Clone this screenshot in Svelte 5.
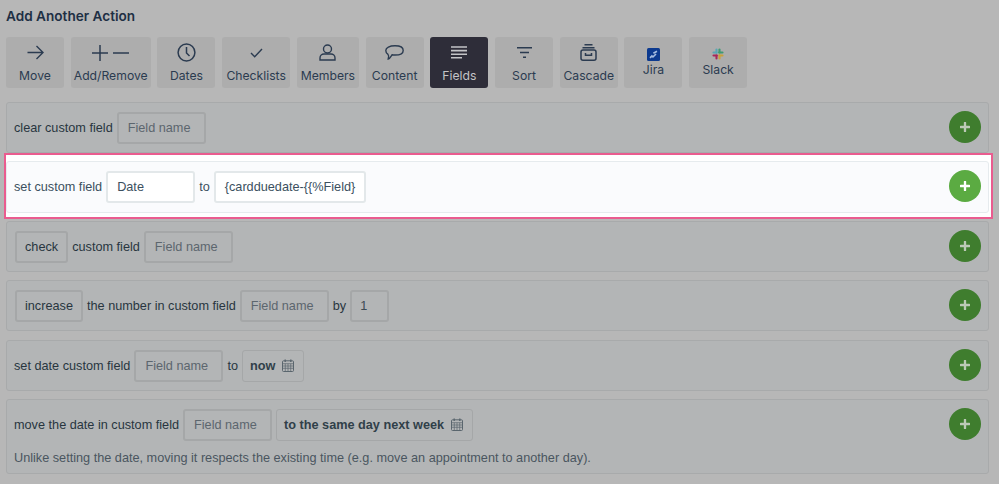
<script>
  const tools = [
    { id: 'move', label: 'Move', w: 58 },
    { id: 'addremove', label: 'Add/Remove', w: 80 },
    { id: 'dates', label: 'Dates', w: 58 },
    { id: 'check', label: 'Checklists', w: 68 },
    { id: 'members', label: 'Members', w: 62 },
    { id: 'content', label: 'Content', w: 58 },
    { id: 'fields', label: 'Fields', w: 58, active: true },
    { id: 'sort', label: 'Sort', w: 58 },
    { id: 'cascade', label: 'Cascade', w: 58 },
    { id: 'jira', label: 'Jira', w: 58, small: true },
    { id: 'slack', label: 'Slack', w: 58, small: true }
  ];
</script>

{#snippet cal()}
  <svg class="cal" viewBox="0 0 12 13" width="12" height="13" aria-hidden="true">
    <rect x="0.5" y="1.8" width="11" height="10.7" rx="1" fill="none" stroke="currentColor" />
    <path d="M0.5 4.7H11.5M0.5 7H11.5M0.5 9.3H11.5M3.3 4.7V12.5M6 4.7V12.5M8.7 4.7V12.5" stroke="currentColor" stroke-width="0.7" fill="none" />
    <path d="M3.2 0.5V3M8.8 0.5V3" stroke="currentColor" stroke-width="1.4" fill="none" />
  </svg>
{/snippet}

{#snippet plus()}
  <button class="add" aria-label="add">
    <svg viewBox="0 0 12 12" width="10" height="10"><path d="M6 1V11M1 6H11" stroke="currentColor" stroke-width="2.8" stroke-linecap="round" /></svg>
  </button>
{/snippet}

<div class="page">
  <h2>Add Another Action</h2>
  <div class="tools">
    {#each tools as t}
      <button class="tool" class:active={t.active} class:small={t.small} style="width:{t.w}px">
        <span class="ico">
          {#if t.id === 'move'}
            <svg width="17" height="15" viewBox="0 0 17 15" fill="none" stroke="currentColor" stroke-width="1.4"><path d="M0.5 7.5H16M9.5 1L16 7.5L9.5 14" /></svg>
          {:else if t.id === 'addremove'}
            <svg width="37" height="16" viewBox="0 0 37 16" fill="none" stroke="currentColor" stroke-width="1.5"><path d="M0 8H16M8 0V16M21 8H37" /></svg>
          {:else if t.id === 'dates'}
            <svg width="19" height="19" viewBox="0 0 19 19" fill="none" stroke="currentColor" stroke-width="1.5"><circle cx="9.5" cy="9.5" r="8.4" /><path d="M9.5 4V10L12.5 13" /></svg>
          {:else if t.id === 'check'}
            <svg width="13" height="10" viewBox="0 0 13 10" fill="none" stroke="currentColor" stroke-width="1.4"><path d="M1 5L4.7 8.7L12 1" /></svg>
          {:else if t.id === 'members'}
            <svg width="17" height="17" viewBox="0 0 17 17" fill="none" stroke="currentColor" stroke-width="1.4"><circle cx="8.5" cy="5" r="4" /><path d="M1 16V14C1 11.5 3 10 5 10H12C14 10 16 11.5 16 14V16Z" /></svg>
          {:else if t.id === 'content'}
            <svg width="19" height="15" viewBox="0 0 19 15" fill="none" stroke="currentColor" stroke-width="1.4"><path d="M10 0.8C15 0.8 18.2 2.6 18.2 5.4C18.2 8.2 14.8 10 10 10C9 10 8 10 7 9.8C6 11.2 4.5 14 3.2 14C3.7 12.5 4 10.5 3 9.4C1.6 8.4 0.8 7 0.8 5.4C0.8 2.6 4.5 0.8 10 0.8Z" /></svg>
          {:else if t.id === 'fields'}
            <svg width="16" height="13" viewBox="0 0 16 13" fill="none" stroke="currentColor" stroke-width="1.6"><path d="M0 1H16M0 4.6H16M0 8.2H16M0 11.8H11" /></svg>
          {:else if t.id === 'sort'}
            <svg width="15" height="11" viewBox="0 0 15 11" fill="none" stroke="currentColor" stroke-width="1.4"><path d="M0 0.8H15M3 5.5H12M6 10.2H9" /></svg>
          {:else if t.id === 'cascade'}
            <svg width="17" height="17" viewBox="0 0 17 17" fill="none" stroke="currentColor" stroke-width="1.5"><rect x="1" y="6" width="15" height="10.2" rx="2" /><path d="M2.5 3.7H14.5M4.5 0.8H12.5M5.5 9V11.2H11.5V9" /></svg>
          {:else if t.id === 'jira'}
            <svg width="13" height="13" viewBox="0 0 13 13"><rect width="13" height="13" rx="1.5" fill="#0c3a8f" /><path d="M3 9.8L5.5 7.4M5.4 9.5L9 6M6.4 5.2L10 3.2" stroke="#a4bce0" stroke-width="1.7" fill="none" /></svg>
          {:else if t.id === 'slack'}
            <svg width="12" height="12" viewBox="0 0 12 12" fill="none" stroke-width="2.1" stroke-linecap="round"><path d="M4.5 1.5V4.8" stroke="#5aa6b5" /><path d="M1.5 4.5H4.5" stroke="#5aa6b5" /><path d="M10.5 4.5H7.2" stroke="#3f9a72" /><path d="M7.5 1.5V4.5" stroke="#3f9a72" /><path d="M7.5 10.5V7.2" stroke="#c9a23c" /><path d="M10.5 7.5H7.5" stroke="#c9a23c" /><path d="M1.5 7.5H4.8" stroke="#a8285a" /><path d="M4.5 10.5V7.5" stroke="#a8285a" /></svg>
          {/if}
        </span>
        <span class="lbl">{t.label}</span>
      </button>
    {/each}
  </div>

  <div class="rows">
    <div class="row">
      <div class="line"><span>clear custom field</span><span class="box ph w89">Field name</span></div>
      {@render plus()}
    </div>

    <div class="row hl">
      <div class="line"><span>set custom field</span><span class="box w89 val">Date</span><span>to</span><span class="box val">{'{cardduedate-{{%Field}'}</span></div>
      {@render plus()}
    </div>

    <div class="row">
      <div class="line"><span class="box btn">check</span><span>custom field</span><span class="box ph w89">Field name</span></div>
      {@render plus()}
    </div>

    <div class="row">
      <div class="line"><span class="box btn">increase</span><span>the number in custom field</span><span class="box ph w89">Field name</span><span>by</span><span class="box num">1</span></div>
      {@render plus()}
    </div>

    <div class="row">
      <div class="line"><span>set date custom field</span><span class="box ph w89">Field name</span><span>to</span><span class="box thin"><b>now</b>{@render cal()}</span></div>
      {@render plus()}
    </div>

    <div class="row tall">
      <div class="col">
        <div class="line"><span>move the date in custom field</span><span class="box ph w89">Field name</span><span class="box thin"><b>to the same day next week</b>{@render cal()}</span></div>
        <p class="note">Unlike setting the date, moving it respects the existing time (e.g. move an appointment to another day).</p>
      </div>
      {@render plus()}
    </div>
  </div>
</div>

<style>
  :global(body) {
    margin: 0;
    background: #b7b7b7;
    overflow: hidden;
  }
  .page {
    box-sizing: border-box;
    width: 999px;
    height: 484px;
    padding: 9px 10px 0 6px;
    color: #2a3a4c;
    font-family: Inter, "Liberation Sans", sans-serif;
  }
  h2 {
    margin: 0;
    font-size: 13.6px;
    line-height: 15px;
    font-weight: 600;
    color: #1e2f44;
  }
  .tools {
    display: flex;
    gap: 6.72px;
    margin-top: 13px;
  }
  .tool {
    height: 51px;
    padding: 0;
    border: 0;
    border-radius: 3px;
    background: #adadad;
    color: #2b3b50;
    font-family: inherit;
    font-size: 12.2px;
    display: flex;
    flex-direction: column;
    align-items: center;
    white-space: nowrap;
    overflow: visible;
  }
  .tool.active {
    background: #2e2d39;
    color: #c4c4c7;
  }
  .ico {
    height: 30px;
    display: flex;
    align-items: center;
    justify-content: center;
    flex: none;
    box-sizing: border-box;
    padding-top: 1px;
  }
  .tool.small .ico {
    height: 24px;
    padding-top: 10px;
  }
  .lbl {
    line-height: 15px;
    margin-top: 1px;
  }
  .rows {
    display: flex;
    flex-direction: column;
    gap: 8.2px;
    margin-top: 14px;
  }
  .row {
    position: relative;
    box-sizing: border-box;
    height: 51.2px;
    display: flex;
    align-items: center;
    justify-content: space-between;
    padding: 0 7px 0 7px;
    border: 1px solid #a8aaab;
    border-radius: 3px;
    background: #b3b5b6;
    color: #28353f;
    font-family: "Liberation Sans", sans-serif;
    font-size: 12.7px;
  }
  .row.tall {
    height: 75.5px;
    align-items: flex-start;
    padding-top: 8px;
  }
  .row.hl {
    background: #fafbfd;
    border-color: #e6ebee;
    color: #3b5060;
  }
  .row.hl::before {
    content: "";
    position: absolute;
    left: -3.5px;
    right: -5px;
    top: -9px;
    bottom: -7.4px;
    border: 2.5px solid #ea5c8f;
    background: #fff;
    z-index: 0;
  }
  .row.hl::after {
    content: "";
    position: absolute;
    inset: -1px;
    border: 1px solid #e6ebee;
    border-radius: 3px;
    background: #fafbfd;
    z-index: 0;
  }
  .row.hl > * {
    position: relative;
    z-index: 1;
  }
  .line {
    display: flex;
    align-items: center;
    gap: 4px;
    white-space: nowrap;
    margin-top: 1px;
  }
  .box {
    box-sizing: border-box;
    height: 32px;
    display: inline-flex;
    align-items: center;
    gap: 5px;
    padding: 0 9px;
    border: 2px solid #a5a7a8;
    border-radius: 3px;
  }
  .w89 {
    width: 89px;
  }
  .ph {
    color: #5c666e;
  }
  .val {
    border-color: #e3e8ea;
    background: #fff;
    color: #3b5060;
  }
  .btn {
    color: #28353f;
    padding: 0 8px;
    margin-left: 1px;
  }
  .num {
    width: 39px;
    padding-left: 8px;
    color: #3d4b54;
  }
  .thin {
    border-width: 1px;
    padding: 0 9px 0 7px;
    color: #303f49;
    gap: 6.5px;
  }
  .thin b {
    font-weight: 700;
    font-size: 12.7px;
  }
  .cal {
    color: #5a666e;
  }
  .col {
    display: flex;
    flex-direction: column;
  }
  .note {
    margin: 10px 0 0;
    line-height: 15px;
    color: #4a5660;
    font-size: 12.7px;
    white-space: nowrap;
  }
  .add {
    flex: none;
    width: 32px;
    height: 32px;
    padding: 0;
    margin-top: -1px;
    border: 0;
    border-radius: 50%;
    background: #3f7d2e;
    color: #bcc9b6;
    display: flex;
    align-items: center;
    justify-content: center;
  }
  .tall .add {
    margin-top: 0;
  }
  .hl .add {
    background: #5bab42;
    color: #fff;
  }
</style>
